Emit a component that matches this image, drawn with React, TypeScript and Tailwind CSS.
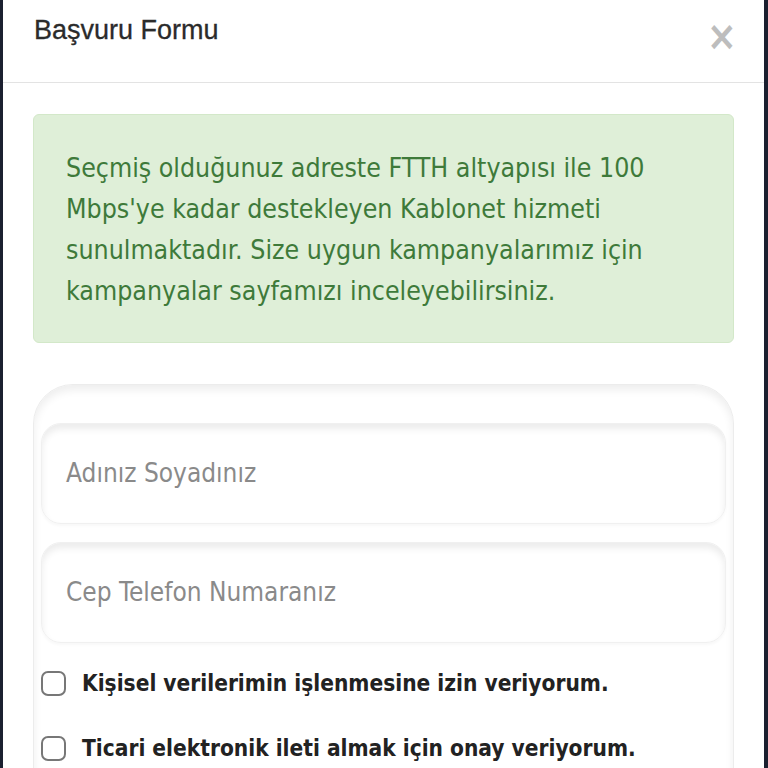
import React from "react";

const font = { fontFamily: '"DejaVu Sans Condensed", "Liberation Sans", sans-serif' };

export default function App() {
  return (
    <div className="w-[768px] h-[768px] overflow-hidden bg-[#1b2030] flex" style={font}>
      <div className="ml-[3px] mr-[4px] flex-1 bg-white flex flex-col">
        <div className="h-[83px] shrink-0 border-b border-[#e3e3e3] flex items-start justify-between pl-[31px] pr-[27px] pt-[13px]">
          <div className="text-[27px] leading-[34px] text-[#2b2b2b]" style={{ fontFamily: '"Liberation Sans", sans-serif', WebkitTextStroke: "0.3px #2b2b2b" }}>Başvuru Formu</div>
          <div className="text-[#bdbdbd] text-[40px] leading-[40px] font-bold mt-[3px]">×</div>
        </div>
        <div className="px-[30px] pt-[31px] shrink-0">
          <div className="bg-[#dfefd8] border border-[#d3e8c9] rounded-[6px] px-[32px] pt-[32px] h-[229px]">
            <p className="text-[#3e7a3a] text-[26.5px] leading-[41px]">
              Seçmiş olduğunuz adreste FTTH altyapısı ile 100 Mbps'ye kadar destekleyen Kablonet hizmeti sunulmaktadır. Size uygun kampanyalarımız için kampanyalar sayfamızı inceleyebilirsiniz.
            </p>
          </div>
          <div className="mt-[41px] border border-[#ececec] rounded-t-[40px] shadow-[inset_0_5px_8px_rgba(0,0,0,0.07)] px-[7px] pt-[38px] h-[420px]">
            <div className="flex flex-col gap-[18px]">
              <div className="h-[101px] rounded-[20px] border border-[#f0f0f0] shadow-[inset_0_5px_7px_rgba(0,0,0,0.08),0_2px_3px_rgba(0,0,0,0.03)] flex items-center pl-[24px] text-[26px] text-[#8a8a8a]">
                Adınız Soyadınız
              </div>
              <div className="h-[101px] rounded-[20px] border border-[#f0f0f0] shadow-[inset_0_5px_7px_rgba(0,0,0,0.08),0_2px_3px_rgba(0,0,0,0.03)] flex items-center pl-[24px] text-[26px] text-[#8a8a8a]">
                Cep Telefon Numaranız
              </div>
            </div>
            <div className="mt-[24px] flex items-center gap-[16px]">
              <div className="w-[25px] h-[25px] rounded-[7px] border-[2.5px] border-[#777] shrink-0" />
              <div className="text-[22.5px] font-bold text-[#222]">Kişisel verilerimin işlenmesine izin veriyorum.</div>
            </div>
            <div className="mt-[31px] flex items-center gap-[16px]">
              <div className="w-[25px] h-[25px] rounded-[7px] border-[2.5px] border-[#777] shrink-0" />
              <div className="text-[22.5px] font-bold text-[#222]">Ticari elektronik ileti almak için onay veriyorum.</div>
            </div>
          </div>
        </div>
      </div>
    </div>
  );
}
